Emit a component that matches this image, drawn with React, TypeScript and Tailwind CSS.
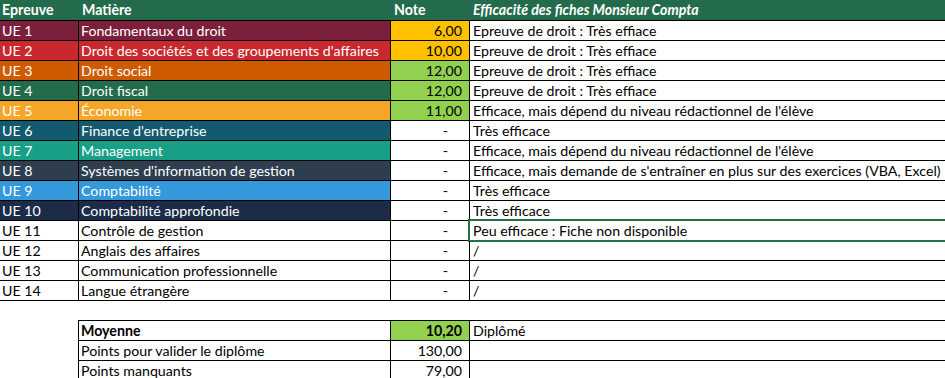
import React from "react";

type Row = {
  ue: string;
  m: string;
  bg: string;
  note: string;
  nbg: string;
  eff: string;
  sel?: boolean;
};

const rows: Row[] = [
  { ue: "UE 1", m: "Fondamentaux du droit", bg: "bg-[#7c1f3c] text-white", note: "6,00", nbg: "bg-[#ffc000]", eff: "Epreuve de droit : Très effiace" },
  { ue: "UE 2", m: "Droit des sociétés et des groupements d'affaires", bg: "bg-[#c9292e] text-white", note: "10,00", nbg: "bg-[#ffc000]", eff: "Epreuve de droit : Très effiace" },
  { ue: "UE 3", m: "Droit social", bg: "bg-[#ce5b00] text-white", note: "12,00", nbg: "bg-[#92d050]", eff: "Epreuve de droit : Très effiace" },
  { ue: "UE 4", m: "Droit fiscal", bg: "bg-[#236b4b] text-white", note: "12,00", nbg: "bg-[#92d050]", eff: "Epreuve de droit : Très effiace" },
  { ue: "UE 5", m: "Économie", bg: "bg-[#f5a629] text-white", note: "11,00", nbg: "bg-[#92d050]", eff: "Efficace, mais dépend du niveau rédactionnel de l'élève" },
  { ue: "UE 6", m: "Finance d'entreprise", bg: "bg-[#145a6e] text-white", note: "-", nbg: "bg-white", eff: "Très efficace" },
  { ue: "UE 7", m: "Management", bg: "bg-[#17a085] text-white", note: "-", nbg: "bg-white", eff: "Efficace, mais dépend du niveau rédactionnel de l'élève" },
  { ue: "UE 8", m: "Systèmes d'information de gestion", bg: "bg-[#2d3e50] text-white", note: "-", nbg: "bg-white", eff: "Efficace, mais demande de s'entraîner en plus sur des exercices (VBA, Excel)" },
  { ue: "UE 9", m: "Comptabilité", bg: "bg-[#3598da] text-white", note: "-", nbg: "bg-white", eff: "Très efficace" },
  { ue: "UE 10", m: "Comptabilité approfondie", bg: "bg-[#1c2b48] text-white", note: "-", nbg: "bg-white", eff: "Très efficace" },
  { ue: "UE 11", m: "Contrôle de gestion", bg: "bg-white text-black", note: "-", nbg: "bg-white", eff: "Peu efficace : Fiche non disponible", sel: true },
  { ue: "UE 12", m: "Anglais des affaires", bg: "bg-white text-black", note: "-", nbg: "bg-white", eff: "/" },
  { ue: "UE 13", m: "Communication professionnelle", bg: "bg-white text-black", note: "-", nbg: "bg-white", eff: "/" },
  { ue: "UE 14", m: "Langue étrangère", bg: "bg-white text-black", note: "-", nbg: "bg-white", eff: "/" },
];

function NoteCell({ note, nbg }: { note: string; nbg: string }) {
  const isDash = note === "-";
  return (
    <div
      className={`w-[79px] shrink-0 border-l border-black text-black text-right ${nbg} ${
        isDash ? "pr-[21px]" : "pr-[7px]"
      }`}
    >
      {note}
    </div>
  );
}

export default function App() {
  return (
    <div
      className="w-[945px] h-[378px] overflow-hidden bg-white text-[14.2px] leading-[19px] text-black"
      style={{ fontFamily: 'Lato, "Liberation Sans", Arial, sans-serif' }}
    >
      {/* Header */}
      <div className="flex h-[20px] bg-[#236b4b] text-white font-bold leading-[20px]">
        <div className="w-[78px] shrink-0 pl-[2px]">Epreuve</div>
        <div className="w-[312px] shrink-0 pl-[3px] border-l border-transparent">Matière</div>
        <div className="w-[79px] shrink-0 pl-[3px] border-l border-transparent">Note</div>
        <div className="flex-1 pl-[3px] border-l border-transparent italic">
          Efficacité des fiches Monsieur Compta
        </div>
      </div>

      {/* Rows */}
      {rows.map((r, i) => (
        <div
          key={r.ue}
          className={`flex h-[20px] border-t border-black ${
            i === rows.length - 1 ? "h-[21px] border-b" : ""
          }`}
        >
          <div className={`w-[78px] shrink-0 pl-[2px] ${r.bg}`}>{r.ue}</div>
          <div className={`w-[312px] shrink-0 pl-[2px] border-l border-black whitespace-nowrap ${r.bg}`}>
            {r.m}
          </div>
          <NoteCell note={r.note} nbg={r.nbg} />
          <div className="relative flex-1 pl-[3px] border-l border-black whitespace-nowrap">
            {r.eff}
            {r.sel && (
              <div className="absolute -left-[2px] -top-[2px] h-[23px] -right-[10px] border-2 border-[#217346]" />
            )}
          </div>
        </div>
      ))}

      {/* Summary */}
      <div className="mt-[19px] ml-[78px]">
        <div className="flex h-[20px] border-t border-l border-black">
          <div className="w-[311px] shrink-0 pl-[2px] font-bold">Moyenne</div>
          <div className="w-[79px] shrink-0 border-l border-black bg-[#92d050] text-right pr-[7px] font-bold">
            10,20
          </div>
          <div className="flex-1 pl-[3px] border-l border-black">Diplômé</div>
        </div>
        <div className="flex h-[20px] border-t border-l border-black">
          <div className="w-[311px] shrink-0 pl-[2px]">Points pour valider le diplôme</div>
          <div className="w-[79px] shrink-0 border-l border-black text-right pr-[7px]">130,00</div>
          <div className="flex-1 border-l border-black"></div>
        </div>
        <div className="flex h-[20px] border-t border-l border-black">
          <div className="w-[311px] shrink-0 pl-[2px]">Points manquants</div>
          <div className="w-[79px] shrink-0 border-l border-black text-right pr-[7px]">79,00</div>
          <div className="flex-1 border-l border-black"></div>
        </div>
      </div>
    </div>
  );
}
